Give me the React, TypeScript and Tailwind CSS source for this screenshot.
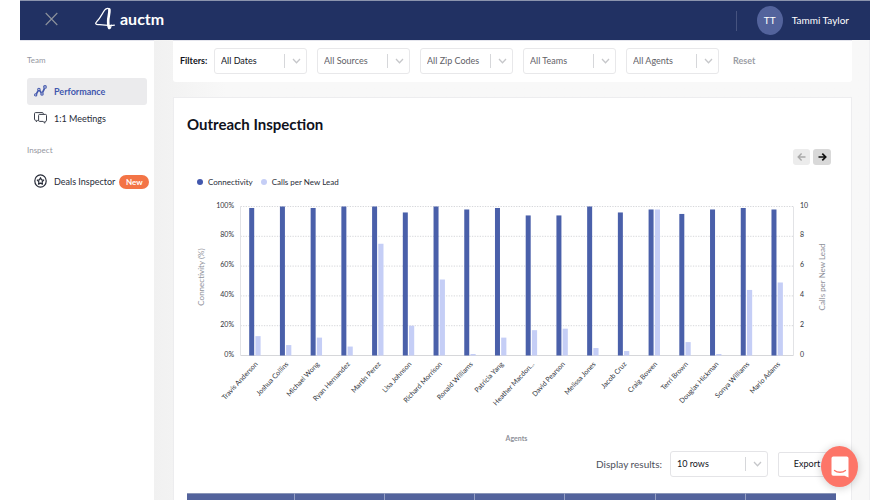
import React from 'react';

interface Agent {
  name: string;
  connectivity: number;
  calls: number;
}

const agents: Agent[] = [
  { name: 'Travis Anderson', connectivity: 99, calls: 1.3 },
  { name: 'Joshua Collins', connectivity: 100, calls: 0.7 },
  { name: 'Michael Wong', connectivity: 99, calls: 1.2 },
  { name: 'Ryan Hernandez', connectivity: 100, calls: 0.6 },
  { name: 'Martin Perez', connectivity: 100, calls: 7.5 },
  { name: 'Lisa Johnson', connectivity: 96, calls: 2 },
  { name: 'Richard Morrison', connectivity: 100, calls: 5.1 },
  { name: 'Ronald Williams', connectivity: 98, calls: 0.1 },
  { name: 'Patricia Yang', connectivity: 99, calls: 1.2 },
  { name: 'Heather Macdon...', connectivity: 94, calls: 1.7 },
  { name: 'David Pearson', connectivity: 94, calls: 1.8 },
  { name: 'Melissa Jones', connectivity: 100, calls: 0.5 },
  { name: 'Jacob Cruz', connectivity: 96, calls: 0.3 },
  { name: 'Craig Bowen', connectivity: 98, calls: 9.8 },
  { name: 'Terri Brown', connectivity: 95, calls: 0.9 },
  { name: 'Douglas Hickman', connectivity: 98, calls: 0.1 },
  { name: 'Sonya Williams', connectivity: 99, calls: 4.4 },
  { name: 'Mario Adams', connectivity: 98, calls: 4.9 },
];

const filters = ['All Dates', 'All Sources', 'All Zip Codes', 'All Teams', 'All Agents'];

function Logo() {
  return (
    <svg width="21" height="23" viewBox="0 0 21 23" fill="none" stroke="#fff" strokeLinecap="round" strokeLinejoin="round">
      <path d="M14.6 3C14.4.6 11.4.9 9.6 3.2C7 6.6 5.6 11 1.6 14.8C-.2 16.6.8 17.8 3.6 17.6C8.6 17.2 14 19.4 19.4 18.2" strokeWidth="1.2" />
      <path d="M14.4 2.6C14.8 6 13.2 10 13.2 14C13.1 17.6 13.4 19.6 14.2 21" strokeWidth="2.6" />
      <path d="M14.6 21.4C16.2 21 15.8 19.2 16.2 18" strokeWidth="1.3" />
    </svg>
  );
}

function Chevron() {
  return (
    <span className="pointer-events-none absolute inset-y-[6px] right-0 flex w-[23px] items-center justify-center border-l border-[#d6d7da]">
      <svg width="9" height="6" viewBox="0 0 9 6" fill="none" stroke="#c6c7ca" strokeWidth="1.3">
        <path d="M1 1l3.5 3.7L8 1" />
      </svg>
    </span>
  );
}

function FilterSelect({ label, className }: { label: string; className: string }) {
  return (
    <div className="relative">
      <select
        aria-label={label}
        className={`block h-[26px] w-[93px] appearance-none rounded-[3px] border border-[#e8e8ea] bg-white pl-[6px] text-[9px] outline-none ${className}`}
      >
        <option>{label}</option>
      </select>
      <Chevron />
    </div>
  );
}

function NavItem({ label, icon, active, badge }: { label: string; icon: React.ReactNode; active?: boolean; badge?: string }) {
  return (
    <a
      href="#"
      className={`flex h-[27px] items-center rounded-[3px] pl-[7px] text-[9px] whitespace-nowrap ${
        active ? 'bg-[#ebebed] font-bold text-[#4257ad]' : 'text-[#272b38]'
      }`}
    >
      <span className="w-5 shrink-0 pb-[2px]">{icon}</span>
      {label}
      {badge && (
        <span className="ml-1 flex h-[14px] w-[30px] shrink-0 items-center justify-center rounded-full bg-[#f37446] text-[8px] font-bold text-white">
          {badge}
        </span>
      )}
    </a>
  );
}

const PLOT_LEFT = 66.5;
const PLOT_RIGHT = 619.5;
const PLOT_TOP = 10.5;
const PLOT_HEIGHT = 149;
const STEP = (PLOT_RIGHT - PLOT_LEFT) / agents.length;

function OutreachChart() {
  const bottom = PLOT_TOP + PLOT_HEIGHT;
  return (
    <svg viewBox="0 0 677 253" className="block w-full text-[7px]" fill="#30343c" role="img" aria-label="Outreach Inspection">
      {[0, 1, 2, 3, 4, 5].map((i) => {
        const y = bottom - (i * PLOT_HEIGHT) / 5;
        return (
          <g key={i}>
            <line x1={PLOT_LEFT} x2={PLOT_RIGHT} y1={y} y2={y} stroke="#d6d7da" strokeDasharray={i ? '1.3 1.3' : undefined} />
            <text x="60" y={y + 1} textAnchor="end">{i * 20}%</text>
            <text x="626" y={y + 1}>{i * 2}</text>
          </g>
        );
      })}
      <line x1={PLOT_LEFT} x2={PLOT_LEFT} y1={PLOT_TOP} y2={bottom} stroke="#e2e3e6" />
      <line x1={PLOT_RIGHT} x2={PLOT_RIGHT} y1={PLOT_TOP} y2={bottom} stroke="#e2e3e6" />
      {agents.map((a, i) => {
        const x = PLOT_LEFT + i * STEP + 8.7;
        const h1 = (a.connectivity / 100) * PLOT_HEIGHT;
        const h2 = (a.calls / 10) * PLOT_HEIGHT;
        return (
          <g key={a.name}>
            <rect x={x} y={bottom - h1} width="5" height={h1} fill="#4a60aa" />
            <rect x={x + 6.2} y={bottom - h2} width="5.2" height={h2} fill="#c5cef6" />
            <text textAnchor="end" transform={`translate(${x + 9} ${bottom + 9}) rotate(-47)`}>{a.name}</text>
          </g>
        );
      })}
      <g className="text-[8px]" textAnchor="middle" fill="#8f919a">
        <text transform="translate(30 81) rotate(-90)">Connectivity (%)</text>
        <text transform="translate(651 81) rotate(-90)">Calls per New Lead</text>
        <text x="342.5" y="245" className="text-[7px] font-bold">Agents</text>
      </g>
    </svg>
  );
}

export default function App() {
  return (
    <div className="h-screen overflow-hidden bg-white px-5 font-['Lato',sans-serif] text-[#272b38]">
      <div className="flex h-full flex-col">
        <header className="flex h-10 shrink-0 items-center border-t border-[#8b94ad] bg-[#213163] text-white">
          <button aria-label="Close menu" className="ml-[25px] pb-1">
            <svg width="13" height="14" viewBox="0 0 13 14" stroke="#8d929c" strokeWidth="1.1">
              <path d="M.7 1l11.6 12M12.3 1L.7 13" />
            </svg>
          </button>
          <a href="#" className="ml-[37px] flex items-center gap-1 pb-1">
            <Logo />
            <span className="text-[16px] leading-5 font-bold">auctm</span>
          </a>
          <div className="mr-[21px] ml-auto flex items-center">
            <span className="mr-5 h-5 w-px bg-[#46537f]" />
            <span className="flex h-[29px] w-[26px] items-center justify-center rounded-[50%] bg-[#53639c] text-[10px]">TT</span>
            <span className="ml-[9px] text-[10px]">Tammi Taylor</span>
          </div>
        </header>

        <div className="flex min-h-0 flex-1 border-r border-[#f0f0f2]">
          <nav className="w-[134px] shrink-0 border-t border-[#e4e5ed] bg-white px-[7px]">
            <h2 className="mt-[13px] text-[8px] leading-3 text-[#95979f]">Team</h2>
            <div className="mt-3">
              <NavItem
                active
                label="Performance"
                icon={
                  <svg width="13" height="12" viewBox="0 0 13 12" fill="none" stroke="#4257ad" strokeWidth="1.1">
                    <circle cx="1.7" cy="9.9" r="1.1" />
                    <circle cx="4.9" cy="4.4" r="1.2" />
                    <circle cx="8" cy="8.9" r="1.2" />
                    <circle cx="11" cy="1.9" r="1.3" />
                    <path d="M2.4 8.8l1.8-3.2M5.6 5.5l1.7 2.3M8.5 7.7l2-4.4" strokeWidth="1.7" />
                  </svg>
                }
              />
              <NavItem
                label="1:1 Meetings"
                icon={
                  <svg width="13" height="12" viewBox="0 0 13 12" fill="none" stroke="#3b3f4b" strokeWidth="1" strokeLinejoin="round">
                    <path d="M4.6 8.3H3.8L2.3 9.8V8.3H1.5a1 1 0 0 1-1-1V1.6a1 1 0 0 1 1-1h6.8a1 1 0 0 1 1 1v.6" />
                    <path d="M5.6 2.4h5.9a1 1 0 0 1 1 1v5a1 1 0 0 1-1 1h-.6v1.8L9 9.4H5.6a1 1 0 0 1-1-1v-5a1 1 0 0 1 1-1z" />
                  </svg>
                }
              />
            </div>
            <h2 className="mt-3 text-[8px] leading-3 text-[#95979f]">Inspect</h2>
            <div className="mt-3">
              <NavItem
                label="Deals Inspector"
                badge="New"
                icon={
                  <svg width="13" height="14" viewBox="0 0 13 14" fill="none" stroke="#272b38" strokeWidth="1.2" strokeLinejoin="round">
                    <ellipse cx="6.5" cy="7" rx="5.7" ry="6.2" />
                    <path d="M6.5 3.7l1 2.1 2.2.4-1.6 1.6.4 2.4-2-1.1-2 1.1.4-2.4-1.6-1.6 2.2-.4z" />
                  </svg>
                }
              />
            </div>
          </nav>

          <main className="min-w-0 flex-1 bg-linear-to-r from-[#f1f1f1] to-[#f8f8f8] to-10% pr-[17px] pl-[19px]">
            <div className="flex h-[42px] items-center rounded-b-[3px] border-t border-[#e4e5ed] bg-white pb-[2px] pl-[7px]">
              <span className="w-[34px] text-[9px] font-bold text-[#12141c]">Filters:</span>
              <div className="flex gap-[10px]">
                {filters.map((f, i) => (
                  <FilterSelect key={f} label={f} className={i === 0 ? 'text-[#12141c]' : 'text-[#5f6167]'} />
                ))}
              </div>
              <button className="ml-[14px] text-[9px] font-bold text-[#9b9da5]">Reset</button>
            </div>

            <section className="mt-[15px] border border-[#ededef] bg-white">
              <h1 className="mt-4 ml-[13px] text-[15px] leading-5 font-bold text-[#10121c]">Outreach Inspection</h1>
              <div className="mt-[15px] mr-5 flex justify-end gap-[3px]">
                <button aria-label="Previous agents" className="flex h-4 w-[17px] items-center justify-center rounded-[3px] bg-[#ececec]">
                  <svg width="9" height="8" viewBox="0 0 9 8" fill="none" stroke="#a9a9a9" strokeWidth="1.4">
                    <path d="M8.5 4H1.2M4.6.6L1.2 4l3.4 3.4" />
                  </svg>
                </button>
                <button aria-label="Next agents" className="flex h-4 w-[18px] items-center justify-center rounded-[3px] bg-[#d9d9d9]">
                  <svg width="9" height="8" viewBox="0 0 9 8" fill="none" stroke="#111" strokeWidth="1.7">
                    <path d="M.5 4h7.2M4.3.6L7.7 4 4.3 7.4" />
                  </svg>
                </button>
              </div>
              <div className="mt-[11px] ml-[23px] flex h-3 items-center text-[8px]">
                <span className="mr-[5px] size-[6px] rounded-full bg-[#4257ad]" />
                Connectivity
                <span className="mr-[5px] ml-2 size-[6px] rounded-full bg-[#c5cef6]" />
                Calls per New Lead
              </div>
              <div className="mt-2">
                <OutreachChart />
              </div>
              <div className="mt-[2px] mr-[15px] flex items-center justify-end">
                <label htmlFor="rows" className="mr-2 text-[10px] text-[#4d505b]">Display results:</label>
                <div className="relative">
                  <select
                    id="rows"
                    className="block h-[26px] w-[98px] appearance-none rounded-[3px] border border-[#e4e4e7] bg-white pl-[6px] text-[9px] text-[#12141c] outline-none"
                  >
                    <option>10 rows</option>
                  </select>
                  <Chevron />
                </div>
                <button className="ml-[10px] h-[25px] w-[58px] rounded-[2px] border border-[#e4e4e7] text-[9px] text-[#12141c]">Export</button>
              </div>
              <div className="mt-4 mr-[15px] ml-[13px]">
                <table className="w-full table-fixed border-collapse bg-[#53639c]">
                  <thead>
                    <tr className="h-7 border-t border-[#8b96b8]">
                      <th className="w-[107px]" />
                      <th className="border-l border-[#97a1c4]" />
                      <th className="border-l border-[#97a1c4]" />
                      <th className="border-l border-[#97a1c4]" />
                      <th className="border-l border-[#97a1c4]" />
                      <th className="border-l border-[#97a1c4]" />
                      <th className="border-l border-[#97a1c4]" />
                    </tr>
                  </thead>
                </table>
              </div>
            </section>
          </main>
        </div>
      </div>

      <button
        aria-label="Open chat"
        className="fixed right-8 bottom-[13px] flex h-[41px] w-[37px] items-center justify-center rounded-[50%] bg-[#fd7568] shadow-[0_1px_8px_rgba(0,0,0,0.2)]"
      >
        <svg width="18" height="22" viewBox="0 0 18 22">
          <path d="M2.3.5h13.4A1.8 1.8 0 0 1 17.5 2.3V21.5L13.5 19.8H2.3A1.8 1.8 0 0 1 .5 18V2.3A1.8 1.8 0 0 1 2.3.5z" fill="#fff" />
          <path d="M3.5 14.5c3 2.3 8 2.3 11 0" fill="none" stroke="#fd7568" strokeWidth="1.3" strokeLinecap="round" />
        </svg>
      </button>
    </div>
  );
}
